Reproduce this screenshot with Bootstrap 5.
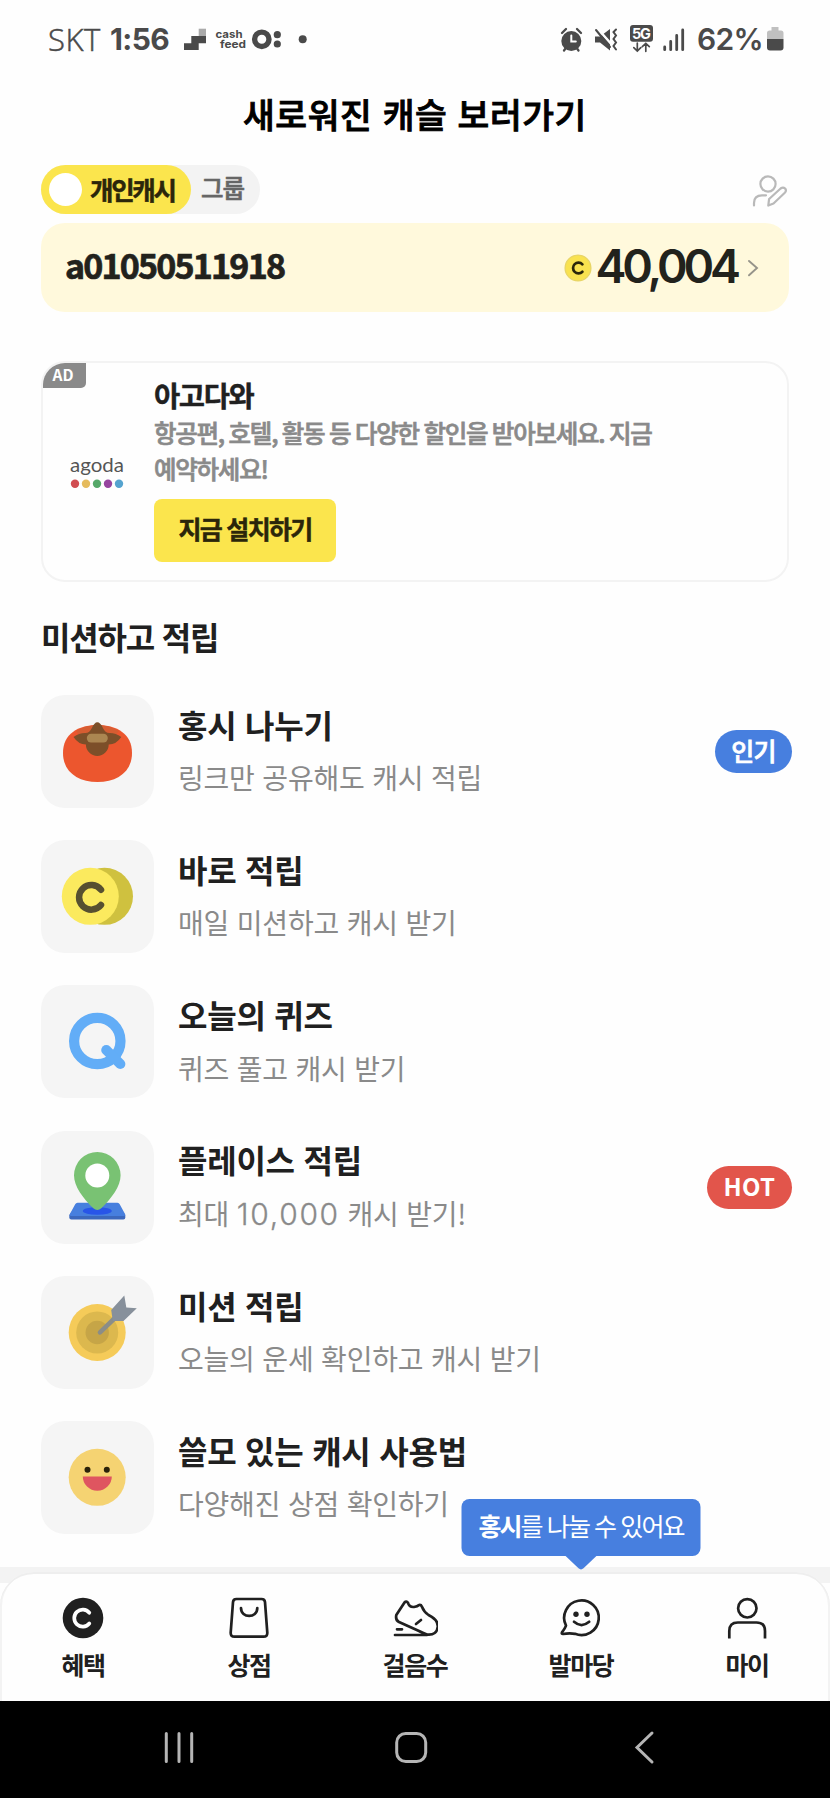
<!DOCTYPE html>
<html lang="ko">
<head>
<meta charset="utf-8">
<meta name="viewport" content="width=device-width, initial-scale=1">
<title>캐시 혜택</title>
<link href="https://cdn.jsdelivr.net/npm/bootstrap@5.3.0/dist/css/bootstrap.min.css" rel="stylesheet">
<style>
body{font-family:"Noto Sans CJK KR",sans-serif;color:#202020;background:#fefefe;line-height:1;width:830px;height:1798px;overflow:hidden}
svg{display:block;flex:none}
.status-bar{height:80px;padding:0 46px 2px 48px;color:#4a4a4a}
.status-bar .latin{font-family:Inter,sans-serif;font-size:30px;line-height:36px}
.status-bar .carrier{font-family:"Open Sans",sans-serif;font-weight:300;font-size:31px;letter-spacing:.6px;-webkit-text-stroke:.5px #4a4a4a}
.clock{letter-spacing:-.6px;margin-left:9px}
.page-title{height:85px;font-size:34.500px;font-weight:500;letter-spacing:.6px;line-height:66px;color:#000;-webkit-text-stroke:.9px #000}
.px-page{padding-left:41px;padding-right:41px}
.switch-row{height:49px;margin-bottom:9px}
.switch-group{width:219px;background:#f3f3f3}
.switch-on{width:150px;height:49px;background:#fbe54d;padding:0 0 2px 8px;color:#2b260a;font-size:25.500px;font-weight:700;letter-spacing:-2.300px;-webkit-text-stroke:.5px #2b260a}
.switch-knob{width:33px;height:33px;margin-right:8px;margin-top:2px}
.switch-off{font-size:24.500px;font-weight:500;letter-spacing:-1px;color:#666;padding:0 0 2px 10px;-webkit-text-stroke:.6px #666}
.balance{height:89px;border-radius:24px;background:#fff9dc;padding:0 29px 0 24px;margin-bottom:49px;color:#22221c}
.user-id{font-size:34px;font-weight:700;letter-spacing:-1.800px;padding-bottom:5px;-webkit-text-stroke:.7px #22221c}
.amount{font-family:Inter,sans-serif;font-size:46.500px;font-weight:600;letter-spacing:-4.100px;margin-left:3px;padding-bottom:3px}
.ad-card{height:221px;border:2px solid #f3f3f3;border-radius:24px;background:#fefefe}
.ad-tag{width:43px;height:25px;background:#8a8a8a;color:#fff;font-size:15.500px;font-weight:700;border-bottom-right-radius:5px;padding:0 3px 2px 0}
.ad-logo{width:108px;margin-right:3px}
.ad-name{font-size:28.500px;font-weight:700;letter-spacing:-1.400px;line-height:36px;margin-top:14px;-webkit-text-stroke:.4px #202020}
.ad-desc{font-size:24.500px;font-weight:500;letter-spacing:-1.250px;word-spacing:-1px;line-height:36.500px;color:#8a8a8a;padding-top:1.500px;-webkit-text-stroke:.7px #8a8a8a}
.ad-btn{width:182px;height:63px;border-radius:8px;background:#fbe54d;color:#2b260a;font-size:25px;font-weight:700;letter-spacing:-1.700px;margin-top:11.500px;border:0;-webkit-text-stroke:.5px #2b260a}
.ad-btn.btn{padding:0 0 4px}
.section-title{font-size:32px;font-weight:700;letter-spacing:-1.200px;line-height:40px;margin:34px 0 39px 0}
.mission{height:113px;margin-bottom:32.200px}
.tile{width:113px;height:113px;border-radius:24px;background:#f5f5f5;margin-right:24px}
.m-title{font-size:32px;font-weight:700;line-height:40px;letter-spacing:-.25px;margin-top:-4px}
.m-sub{font-size:28px;line-height:36px;letter-spacing:-.2px;color:#8a8a8a;margin-top:15.500px}
.wide-num{font-family:Inter,sans-serif;font-weight:300;font-size:30px;line-height:30px;letter-spacing:1.700px;-webkit-text-stroke:.3px #8a8a8a}
.pill-tag{height:43px;font-size:25px;font-weight:500;color:#fff;margin-right:-3px;padding-bottom:3px;letter-spacing:-.8px;-webkit-text-stroke:.7px #fff}
.pill-blue{width:77px;background:#477fdf}
.pill-red{width:85px;background:#e2554b;font-weight:700;font-size:24px;letter-spacing:.3px;-webkit-text-stroke:0}
.tail-band{height:16px;background:#f3f3f3}
.tab-bar{height:129px;margin-top:-11px;box-shadow:inset 0 2px 0 #eee,inset 2px 0 0 #f3f3f3,inset -2px 0 0 #f3f3f3;border-radius:34px 34px 0 0;background:#fefefe;position:relative}
.tab-item{padding-top:23.500px;font-size:25px;font-weight:700;letter-spacing:-1.400px;color:#202020}
.tab-item .lbl{margin-top:10px;line-height:28px}
.tip{position:absolute;top:-73px;left:50%;transform:translateX(-50%);width:239px;height:57px;border-radius:8px;background:#477fdf;color:#fff;font-size:25px;font-weight:400;letter-spacing:-1.900px;white-space:nowrap;padding-bottom:4px}
.tip svg{position:absolute;top:56px;left:103px}
.sys-bar{height:97px;background:#000}
</style>
</head>
<body class="d-flex flex-column">
<header class="status-bar d-flex align-items-center">
  <span class="latin carrier">SKT</span>
  <span class="latin clock fw-bold">1:56</span>
  <svg class="ms-auto" style="margin-right:246px" width="130" height="30" viewBox="184 24 130 30" fill="#4a4a4a">
    <path fill="#aaa" d="M198.700 28.700h7.300v7.500h-7.300z"/><path d="M191.300 36H206v7.300h-7.300V50H184v-6.800h7.300z"/>
    <text x="215.500" y="37.600" font-family="Inter" font-weight="700" font-size="10.500" textLength="27" lengthAdjust="spacingAndGlyphs">cash</text>
    <text x="220" y="47.600" font-family="Inter" font-weight="700" font-size="10.500" textLength="26" lengthAdjust="spacingAndGlyphs">feed</text>
    <circle cx="261.800" cy="39.300" r="7.200" fill="none" stroke="#4a4a4a" stroke-width="5.400"/>
    <circle cx="277.300" cy="34.700" r="3.600"/><circle cx="277.300" cy="44" r="3.600"/><circle cx="302.700" cy="39.300" r="4"/>
  </svg>
  <svg width="130" height="32" viewBox="561 22 130 32" fill="#4a4a4a" stroke-linecap="round">
    <circle cx="572.300" cy="40" r="10"/><path d="M563 32l4-4M578 28l4 4M565 49.500l3-4M579.500 49.500l-3-4" stroke="#4a4a4a" stroke-width="2.300"/><path d="M572.300 34.500v6h4.500" fill="none" stroke="#fefefe" stroke-width="2"/>
    <path d="M596 35.500h5l10-7.500v21.500l-10-8h-5z"/><path d="M598.500 27.500l16 18" stroke="#fefefe" stroke-width="2.500"/><path d="M597 29l14 17" stroke="#4a4a4a" stroke-width="2"/><path d="M617 28.500l-2.500 2.500 2.500 3.500-2.500 3.500 2.500 3.500-2.500 3.500 2.500 3.500" fill="none" stroke="#4a4a4a" stroke-width="2"/>
    <rect x="631" y="24" width="23" height="16.800" rx="3"/><text x="633" y="37.800" font-family="Inter" font-weight="700" font-size="14.500" fill="#fefefe" textLength="19">5G</text>
    <path d="M638.300 42v8m-3.500-3.300l3.500 3.300 3.500-3.300M646.800 50.300v-8m-3.500 3.300l3.500-3.300 3.500 3.300" fill="none" stroke="#4a4a4a" stroke-width="1.700"/>
    <path d="M665.700 46v2.700M671.700 40.500v8.200M677.700 34.500v14.200M683.700 29v19.700" stroke="#4a4a4a" stroke-width="2.800"/>
  </svg>
  <span class="latin fw-semibold text-end" style="width:73px;letter-spacing:-.7px">62%</span>
  <svg style="margin-left:4px" width="17" height="24" viewBox="0 0 17 24"><path fill="#c0c0c0" d="M4.500 0h7v3.500H14a2.500 2.500 0 0 1 2.500 2.500v6H0V6a2.500 2.500 0 0 1 2.500-2.500h2z"/><path fill="#4a4a4a" d="M0 12h16.500v8.500a3 3 0 0 1-3 3h-10.500a3 3 0 0 1-3-3z"/></svg>
</header>
<h1 class="page-title text-center m-0">새로워진 캐슬 보러가기</h1>

<main class="px-page flex-grow-1">
  <div class="switch-row d-flex justify-content-between">
    <div class="switch-group rounded-pill d-flex align-items-center">
      <div class="switch-on rounded-pill d-flex align-items-center"><span class="switch-knob rounded-circle bg-white"></span>개인캐시</div>
      <span class="switch-off">그룹</span>
    </div>
    <svg width="38" height="34" viewBox="751 174 38 34" style="margin-top:9px" fill="none" stroke="#b9b9b9" stroke-width="2.200" stroke-linecap="round" stroke-linejoin="round"><circle cx="768" cy="184" r="7.600"/><path d="M754 205.500v-2.500q0-7.700 8-7.700h4M768.300 205.500l.8-6.500 11.500-10.500q2.500-1.800 4.500 0 1.800 2.200-.3 4.300L773.500 203.500z"/></svg>
  </div>

  <section class="balance d-flex align-items-center">
    <span class="user-id">a01050511918</span>
    <svg class="ms-auto" width="28" height="28" viewBox="0 0 28 28"><circle cx="14" cy="14" r="12.900" fill="#f9e24f" stroke="#e8d566" stroke-width="1.300"/><path d="M18.400 10.300a5.400 5.400 0 1 0 0 7.400" fill="none" stroke="#2b260a" stroke-width="2.700" stroke-linecap="round"/></svg>
    <span class="amount">40,004</span>
    <svg width="14" height="20" viewBox="0 0 14 20" style="margin-left:9px"><path d="M3 3l8 7-8 7.300" fill="none" stroke="#96948a" stroke-width="1.900" stroke-linecap="round"/></svg>
  </section>

  <section class="ad-card d-flex position-relative overflow-hidden">
    <span class="ad-tag position-absolute top-0 start-0 d-flex align-items-center justify-content-center">AD</span>
    <div class="ad-logo d-flex align-items-center justify-content-center">
      <svg width="68" height="46" viewBox="63 446 68 46"><text x="70" y="469" font-family="Lato" font-size="19" fill="#555" textLength="54" lengthAdjust="spacingAndGlyphs">agoda</text><circle cx="75" cy="480.700" r="4.200" fill="#d14d51"/><circle cx="86" cy="480.700" r="4.200" fill="#e5bb5d"/><circle cx="97" cy="480.700" r="4.200" fill="#55a869"/><circle cx="108" cy="480.700" r="4.200" fill="#96459f"/><circle cx="119" cy="480.700" r="4.200" fill="#55a3cf"/></svg>
    </div>
    <div>
      <div class="ad-name">아고다와</div>
      <div class="ad-desc">항공편, 호텔, 활동 등 다양한 할인을 받아보세요. 지금<br>예약하세요!</div>
      <button class="ad-btn btn">지금 설치하기</button>
    </div>
  </section>

  <h2 class="section-title">미션하고 적립</h2>

  <div class="mission d-flex align-items-center">
    <div class="tile"><svg width="113" height="113"><path d="M56.500 30C76 30 91 39 91 58S76 87 56.500 87 22 77 22 58 37 30 56.500 30z" fill="#ec562e"/><path d="M35 36Q45 30 56.500 30T78 36L70 45H42z" fill="#d65d32"/><path d="M56.300 27.300q3 0 5.500 5.500t7 5.200q6 0 11.500 4-5 7.500-12.600 7.500a11.400 11.400 0 1 1-22.800 0Q37.500 49.500 32.500 42q5.500-4 11.500-4 4.500.3 7-5.200t5.300-5.500z" fill="#7c4f29"/><rect x="45.800" y="38.800" width="21" height="8.600" rx="4.300" fill="#ab8651"/></svg></div>
    <div><div class="m-title">홍시 나누기</div><div class="m-sub">링크만 공유해도 캐시 적립</div></div>
    <span class="pill-tag pill-blue rounded-pill ms-auto d-flex align-items-center justify-content-center">인기</span>
  </div>
  <div class="mission d-flex align-items-center">
    <div class="tile"><svg width="113" height="113"><circle cx="63.500" cy="56.300" r="28.500" fill="#cfc13f"/><circle cx="49.300" cy="56.300" r="28.500" fill="#fbea5e"/><path d="M60 49.700a12.300 12.300 0 1 0 0 15.300" fill="none" stroke="#575030" stroke-width="6.500" stroke-linecap="round"/></svg></div>
    <div><div class="m-title">바로 적립</div><div class="m-sub">매일 미션하고 캐시 받기</div></div>
  </div>
  <div class="mission d-flex align-items-center">
    <div class="tile"><svg width="113" height="113" fill="none" stroke="#62adf7" stroke-width="10.200"><circle cx="56.300" cy="56" r="23.200"/><path d="M65.300 65l14 14" stroke-linecap="round"/></svg></div>
    <div><div class="m-title">오늘의 퀴즈</div><div class="m-sub">퀴즈 풀고 캐시 받기</div></div>
  </div>
  <div class="mission d-flex align-items-center">
    <div class="tile"><svg width="113" height="113"><path d="M36 74h41l7.300 10v2.500q0 2-2 2h-52q-2 0-2-2V84z" fill="#3c68bd"/><path d="M36.500 71.800h40q1.500 0 2.200 1.500l5.200 9.500q1 2.200-1 2.200H30q-2.200 0-1-2.200l5.200-9.500q.8-1.500 2.300-1.500z" fill="#477fde"/><ellipse cx="56.300" cy="80" rx="14.500" ry="3.800" fill="#2855e8"/><path d="M56.300 21a23.300 23.300 0 0 1 23.300 23.300c0 11-9 23-19.300 33q-4 3.200-8 0C42 67.300 33 55.300 33 44.300A23.300 23.300 0 0 1 56.300 21z" fill="#79c273"/><circle cx="56.300" cy="44.500" r="12" fill="#fff"/></svg></div>
    <div><div class="m-title">플레이스 적립</div><div class="m-sub">최대 <span class="wide-num">10,000</span> 캐시 받기!</div></div>
    <span class="pill-tag pill-red rounded-pill ms-auto d-flex align-items-center justify-content-center">HOT</span>
  </div>
  <div class="mission d-flex align-items-center">
    <div class="tile"><svg width="113" height="113"><circle cx="56.200" cy="56.500" r="28.500" fill="#f5cb59"/><circle cx="56.200" cy="56.500" r="21" fill="#dcb84e"/><circle cx="56.200" cy="56.500" r="11.700" fill="#c6a547"/><path d="M59 56.300L76 40" stroke="#8b8d88" stroke-width="4.600" stroke-linecap="round"/><path d="M83.300 19.500l2 12 10.500.8L82.500 45H71.800L70.200 34z" fill="#87909b"/></svg></div>
    <div><div class="m-title">미션 적립</div><div class="m-sub">오늘의 운세 확인하고 캐시 받기</div></div>
  </div>
  <div class="mission d-flex align-items-center">
    <div class="tile"><svg width="113" height="113"><circle cx="56.200" cy="56.300" r="28.500" fill="#f5d372"/><circle cx="46.500" cy="48.800" r="3" fill="#2b220a"/><circle cx="65.800" cy="48.800" r="3" fill="#2b220a"/><path d="M41.800 55.500h29a14.500 14.300 0 0 1-29 0z" fill="#df5560"/></svg></div>
    <div><div class="m-title">쓸모 있는 캐시 사용법</div><div class="m-sub">다양해진 상점 확인하기</div></div>
  </div>
</main>

<div class="tail-band flex-shrink-0"></div>
<nav class="tab-bar row row-cols-5 g-0 flex-shrink-0 mx-0 text-center">
  <div class="col tab-item"><svg class="mx-auto" width="44" height="44"><circle cx="22" cy="22" r="20.300" fill="#202020"/><path d="M28.300 16.700a8.500 8.500 0 1 0 0 10.800" fill="none" stroke="#fefefe" stroke-width="3.700" stroke-linecap="round"/></svg><div class="lbl">혜택</div></div>
  <div class="col tab-item"><svg class="mx-auto" width="44" height="44" fill="none" stroke="#202020" stroke-width="2.700" stroke-linecap="round"><path d="M9.500 3h25q3.300 0 3.500 3.200l2.300 30.500q.2 4-3.800 4h-29q-4 0-3.800-4L6 6.200Q6.200 3 9.500 3z"/><path d="M14 12c0 10.500 16.300 10.500 16.300 0"/></svg><div class="lbl">상점</div></div>
  <div class="col tab-item"><svg class="mx-auto" width="46" height="44" fill="none" stroke="#202020" stroke-width="2.700" stroke-linecap="round" stroke-linejoin="round"><path d="M12.500 6.500q1.800-2 3.500.3 1 4.500 6 4.200 3.500-.5 5-2 2-.5 2.800 1.500 2.200 5.500 6.700 8.500 9.500 4.500 9.300 11.500-.8 9-10.800 8-4.500-1.500-8-3.500L7 26q-3.700-1.800-2.700-7z"/><path d="M24 28l5-4M5 33.300h5M3 39h32"/></svg><div class="lbl">걸음수</div></div>
  <div class="col tab-item position-relative"><div class="tip d-flex align-items-center justify-content-center"><span><b>홍시</b>를 나눌 수 있어요</span><svg width="33" height="16"><path d="M0 0h33L19 13.300q-2.500 2.200-5 0z" fill="#477fdf"/></svg></div><svg class="mx-auto" width="44" height="44" fill="none" stroke="#202020" stroke-width="2.700" stroke-linecap="round" stroke-linejoin="round"><path d="M7 29.500A17.300 17.300 0 1 1 16 37.800q-6-.8-12 .2-1.800 0-1-1.800Q6.500 31.500 7 29.500z"/><circle cx="17" cy="18.300" r="2.700" fill="#202020" stroke="none"/><circle cx="28" cy="18.300" r="2.700" fill="#202020" stroke="none"/><path d="M15 25.800q7.500 6.500 15.200 0"/></svg><div class="lbl">발마당</div></div>
  <div class="col tab-item"><svg class="mx-auto" width="44" height="44" fill="none" stroke="#202020" stroke-width="2.700"><circle cx="22.300" cy="12.300" r="9.200"/><path d="M4.300 42.500V35q0-8.500 8.500-8.500h18.700q8.500 0 8.500 8.500v7.500"/></svg><div class="lbl">마이</div></div>
</nav>
<footer class="sys-bar flex-shrink-0">
  <svg width="830" height="97" fill="none" stroke="#b5b5b5" stroke-width="3" stroke-linecap="round"><path d="M166.300 32.500v28M179 32.500v28M191.700 32.500v28"/><rect x="396.700" y="32.500" width="29" height="28" rx="9"/><path d="M652 32l-15 14.500L652 61"/></svg>
</footer>
<script src="https://cdn.jsdelivr.net/npm/bootstrap@5.3.0/dist/js/bootstrap.bundle.min.js"></script>
</body>
</html>
